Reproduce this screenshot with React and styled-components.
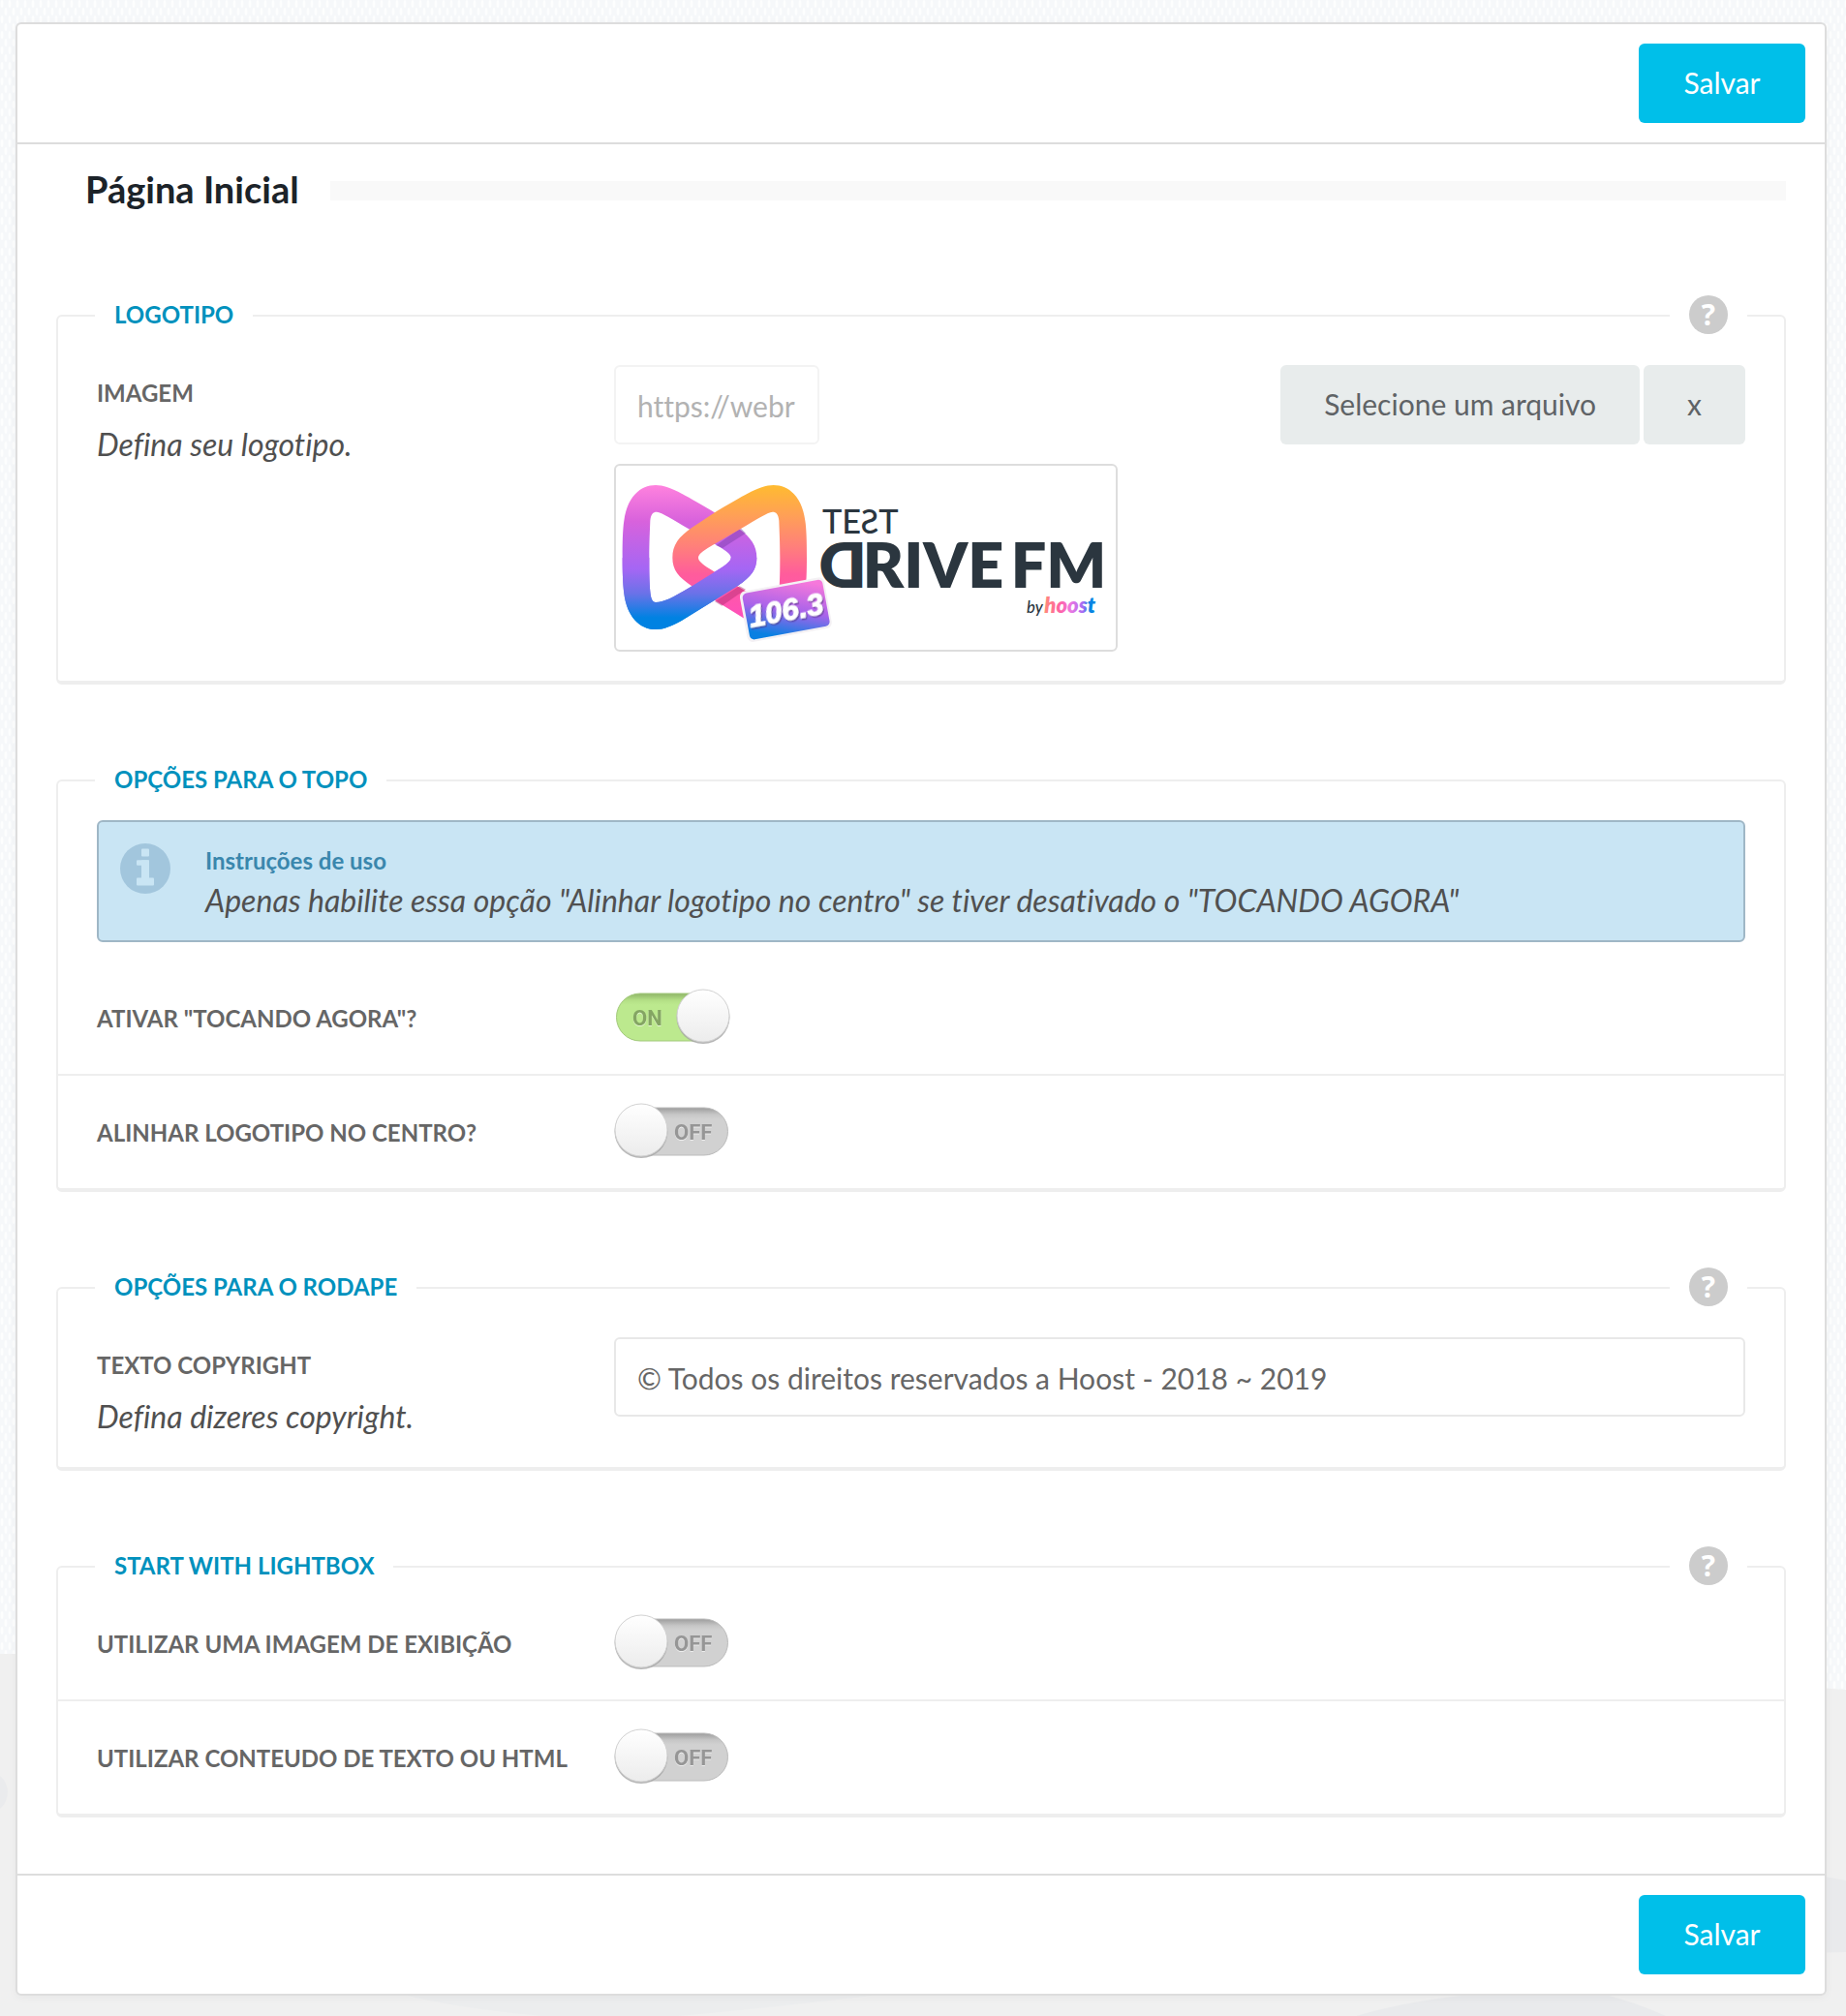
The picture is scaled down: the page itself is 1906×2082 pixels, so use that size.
import React, { useState } from "react";
import styled, { createGlobalStyle } from "styled-components";

const GlobalStyle = createGlobalStyle`
  * {
    box-sizing: border-box;
  }

  body {
    margin: 0;
    background-color: #f0f0f0;
    font-family: Lato, "Liberation Sans", sans-serif;
    font-size: 30px;
    font-variant-ligatures: no-common-ligatures;
    color: #666;
  }
`;

const Page = styled.div`
  position: relative;
  padding: 23px 20px 21px 16px;
`;

const Backdrop = styled.svg`
  position: absolute;
  top: 0;
  left: 0;
  width: 100%;
  height: 100%;
`;

const Panel = styled.form`
  position: relative;
  background-color: #fff;
  border: 2px solid #ddd;
  border-radius: 6px;
  box-shadow: 0 2px 10px rgba(0, 0, 0, 0.04);
`;

const Toolbar = styled.div`
  display: flex;
  justify-content: flex-end;
  padding: 20px;
`;

const Header = styled(Toolbar)`
  border-bottom: 2px solid #ddd;
`;

const Footer = styled(Toolbar)`
  border-top: 2px solid #ddd;
`;

const Button = styled.button`
  height: 82px;
  padding: 0 45px 2px;
  border: none;
  border-radius: 6px;
  font-family: inherit;
  font-size: 30px;
  cursor: pointer;
  background-color: #e8ecec;
  color: #5f6366;
`;

const SaveButton = styled(Button)`
  min-width: 172px;
  background-color: #00bfe9;
  color: #fff;
`;

const Body = styled.main`
  padding: 0 40px 58px;
`;

const TitleRow = styled.div`
  display: flex;
  align-items: center;
  gap: 32px;
  height: 96px;
  padding-left: 30px;
`;

const Title = styled.h1`
  margin: 0;
  padding-bottom: 4px;
  font-size: 38px;
  font-weight: 700;
  color: #1c2329;
`;

const TitleBar = styled.div`
  flex: 1;
  height: 20px;
  background-color: #f9f9f9;
`;

const Group = styled.fieldset`
  position: relative;
  min-width: 0;
  margin: 84px 0 0;
  padding: 6px 0 0;
  border: 2px solid #eee;
  border-bottom-width: 4px;
  border-radius: 6px;

  &:first-of-type {
    margin-top: 66px;
  }
`;

const Legend = styled.legend`
  margin-left: 38px;
  padding: 0 20px 2px;
  font-size: 24px;
  font-weight: 700;
  line-height: 28px;
  color: #0091bd;
`;

const HelpBox = styled.div`
  position: absolute;
  top: -36px;
  right: 38px;
  padding: 0 20px;
  background-color: #fff;
`;

const HelpButton = styled.button`
  display: block;
  width: 40px;
  height: 40px;
  padding: 0;
  border: none;
  border-radius: 50%;
  background-color: #ccc;
  color: #fff;
  font-family: "Open Sans", sans-serif;
  font-size: 30px;
  font-weight: 700;
  line-height: 40px;
  cursor: pointer;
`;

const Row = styled.div`
  display: grid;
  grid-template-columns: 534px 1fr;
  align-items: start;
  padding: 30px 40px;

  & + & {
    border-top: 2px solid #eee;
  }
`;

const Label = styled.label`
  display: block;
  padding-top: 2px;
  font-size: 24px;
  font-weight: 700;
  line-height: 54px;
  color: #666;
`;

const Description = styled.p`
  margin: 0;
  padding-top: 4px;
  font-size: 32px;
  font-style: italic;
  line-height: 44px;
  color: #505050;
`;

const Input = styled.input`
  width: 100%;
  height: 82px;
  padding: 2px 22px 0;
  border: 2px solid #e8e8e8;
  border-radius: 6px;
  background-color: #fff;
  font-family: inherit;
  font-size: 30px;
  font-variant-ligatures: inherit;
  color: #666;

  &:disabled {
    width: 212px;
    border-color: #f3f3f3;
    color: #b2b2b2;
  }
`;

const Upload = styled.div`
  display: flex;
  flex-direction: column;
  align-items: flex-start;
  gap: 20px;
`;

const UploadLine = styled.div`
  display: flex;
  align-self: stretch;
  justify-content: space-between;
`;

const UploadButtons = styled.div`
  display: flex;
  gap: 4px;
`;

const Preview = styled.div`
  width: 520px;
  border: 2px solid #ddd;
  border-radius: 6px;

  svg {
    display: block;
    width: 100%;
  }
`;

const Alert = styled.div`
  display: flex;
  gap: 36px;
  margin: 20px 40px;
  padding: 20px 22px;
  border: 2px solid #9fb7c6;
  border-radius: 6px;
  background-color: #c9e5f4;
`;

const AlertIcon = styled.svg`
  flex: none;
  width: 52px;
  height: 52px;
  margin-top: 2px;
`;

const AlertTitle = styled.h4`
  margin: 0;
  font-size: 24px;
  font-weight: 700;
  line-height: 40px;
  color: #3a87ad;
`;

const AlertText = styled.p`
  margin: 0;
  font-size: 32px;
  font-style: italic;
  line-height: 42px;
  color: #505050;
`;

const SwitchBox = styled.div`
  position: relative;
  width: 120px;
  height: 56px;

  input {
    position: absolute;
    inset: 0;
    width: 100%;
    height: 100%;
    margin: 0;
    opacity: 0;
    cursor: pointer;
  }

  svg {
    display: block;
    overflow: visible;
  }

  text {
    font-family: Roboto, "Liberation Sans", sans-serif;
    font-size: 22px;
    font-weight: 700;
    filter: drop-shadow(0 1px 0 rgba(255, 255, 255, 0.6));
  }
`;

const Background = () => (
  <Backdrop viewBox="0 0 1906 2082" preserveAspectRatio="none" aria-hidden="true">
    <defs>
      <pattern id="weave" width="8" height="16" patternUnits="userSpaceOnUse">
        <rect width="8" height="16" fill="#f6f8fa" />
        <ellipse cx="2" cy="4" rx="1.5" ry="4" fill="#fdfefe" />
        <ellipse cx="6" cy="12" rx="1.5" ry="4" fill="#fdfefe" />
      </pattern>
    </defs>
    <rect width="1906" height="2082" fill="#f0f0f0" />
    <path d="M0 0H1906V1745Q1400 1708 900 1708H0Z" fill="url(#weave)" />
    <circle cx="-14" cy="1851" r="22" fill="#eaebed" />
    <path d="M1700 1930Q1850 1930 1906 1942V2016Q1880 2017 1700 2017Z" fill="#e9eaec" />
    <path d="M420 2061H900Q780 2075 700 2082H560Q480 2075 420 2061Z" fill="#ecedee" />
    <path d="M1400 2082Q1460 2064 1540 2058H1650Q1690 2068 1720 2082Z" fill="#e9eaec" />
  </Backdrop>
);

const InfoIcon = () => (
  <AlertIcon viewBox="0 0 52 52" aria-hidden="true">
    <circle cx="26" cy="26" r="26" fill="#a2c6dd" />
    <g fill="#c9e5f4">
      <rect x="22" y="5.5" width="8" height="8" rx="1" />
      <rect x="17" y="17.3" width="13" height="5.5" rx="1" />
      <rect x="22" y="17.3" width="8" height="22" rx="1" />
      <rect x="17" y="35.5" width="18" height="8" rx="1" />
    </g>
  </AlertIcon>
);

// one closed ring of the logo mark, mirrored for the second one
const LOOP =
  "M32 300C32 250 33 210 37 185C46 115 85 75 135 75C175 75 215 100 310 155L385 205C430 235 448 262 448 300C448 338 430 360 385 390L215 495C185 512 160 522 135 522C85 522 45 480 37 410C33 380 32 340 32 300ZM115 300C115 250 117 215 118 185C120 165 127 158 138 158C155 160 185 180 240 212L330 265C355 280 368 290 368 300C368 310 355 320 335 333L240 392C190 422 160 438 135 438C124 438 120 425 118 405C115 370 115 340 115 300Z";

const Logo = () => (
  <svg viewBox="12 15 1548 570" role="img" aria-label="Test Drive FM 106.3">
    <defs>
      <linearGradient id="cool" gradientUnits="userSpaceOnUse" x1="0" y1="75" x2="0" y2="522">
        <stop offset="0" stopColor="#ff82de" />
        <stop offset="0.25" stopColor="#d862dc" />
        <stop offset="0.58" stopColor="#a566f4" />
        <stop offset="0.75" stopColor="#6b72e8" />
        <stop offset="0.92" stopColor="#0082e2" />
      </linearGradient>
      <linearGradient id="warm" gradientUnits="userSpaceOnUse" x1="0" y1="75" x2="0" y2="500">
        <stop offset="0" stopColor="#ffbb30" />
        <stop offset="0.22" stopColor="#ffa056" />
        <stop offset="0.45" stopColor="#ff7f7b" />
        <stop offset="0.65" stopColor="#ff5c9c" />
        <stop offset="1" stopColor="#ff4fbe" />
      </linearGradient>
      <linearGradient id="badge" x1="0.8" y1="0" x2="0.2" y2="1">
        <stop offset="0" stopColor="#f678db" />
        <stop offset="0.5" stopColor="#a863ea" />
        <stop offset="0.95" stopColor="#0a80e2" />
      </linearGradient>
      <linearGradient id="hoost" x1="0" x2="1">
        <stop offset="0" stopColor="#ff8a7a" />
        <stop offset="0.3" stopColor="#ff62a4" />
        <stop offset="0.5" stopColor="#ee78e0" />
        <stop offset="0.75" stopColor="#a56cf4" />
        <stop offset="0.87" stopColor="#0a84e2" />
      </linearGradient>
      <filter id="badge-shadow">
        <feDropShadow dx="3" dy="5" stdDeviation="2" floodColor="#4b2f80" floodOpacity="0.6" />
      </filter>
      <clipPath id="lower">
        <rect x="0" y="300" width="460" height="240" />
      </clipPath>
    </defs>
    <path d={LOOP} fill="url(#cool)" fillRule="evenodd" />
    <path d="M322 262L398 208L414 224L342 270Z" fill="#7a3ba8" opacity="0.45" />
    <path d={LOOP} fill="url(#warm)" fillRule="evenodd" transform="translate(635 0) scale(-1 1)" />
    <path d="M318 436L395 388L414 398L340 449Z" fill="#b02c72" opacity="0.45" />
    <path d={LOOP} fill="url(#cool)" fillRule="evenodd" clipPath="url(#lower)" />
    <g transform="rotate(-10.5 538 461)">
      <rect x="405" y="381" width="266" height="160" rx="18" fill="#f4f1f4" />
      <rect x="413" y="388" width="252" height="146" rx="14" fill="url(#badge)" />
      <text
        x="538"
        y="494"
        textAnchor="middle"
        fontFamily="Liberation Sans, sans-serif"
        fontSize="94"
        fontWeight="700"
        fontStyle="italic"
        fill="#fff"
        stroke="#fff"
        strokeWidth="3"
        filter="url(#badge-shadow)"
      >
        106.3
      </text>
    </g>
    <g fill="#2b363f" fontFamily="Lato, sans-serif">
      <g fontSize="103" fontWeight="500">
        <text x="651" y="224">TE</text>
        <text transform="translate(826 224) scale(-1 1)">S</text>
        <text x="826" y="224">T</text>
      </g>
      <g fontSize="194" fontWeight="800">
        <text transform="translate(788 393) scale(-1 1)">D</text>
        <text x="776" y="393">RIVE</text>
        <text x="1235" y="393">FM</text>
      </g>
      <g fontStyle="italic">
        <text x="1284" y="471" fontSize="50" fontWeight="500">by</text>
        <text x="1339" y="471" fontSize="66" fontWeight="800" fill="url(#hoost)">hoost</text>
      </g>
    </g>
  </svg>
);

const Switch = ({ id, initial = false }) => {
  const [on, setOn] = useState(initial);

  return (
    <SwitchBox>
      <svg width="120" height="56" viewBox="0 2 120 56" aria-hidden="true">
        <defs>
          <linearGradient id={`${id}-knob`} x1="0" y1="0" x2="0" y2="1">
            <stop offset="0" stopColor="#fff" />
            <stop offset="1" stopColor="#ececec" />
          </linearGradient>
          <linearGradient id={`${id}-track`} x1="0" y1="0" x2="0" y2="1">
            <stop offset="0" stopColor={on ? "#8fb568" : "#9c9c9c"} />
            <stop offset="0.14" stopColor={on ? "#b3df85" : "#c6c6c6"} />
            <stop offset="0.24" stopColor={on ? "#bce98e" : "#d1d1d1"} />
          </linearGradient>
        </defs>
        <rect
          x={on ? 2.5 : 10.5}
          y="5"
          width="107"
          height="49"
          rx="24.5"
          fill={`url(#${id}-track)`}
          stroke={on ? "#a3c97c" : "#bcbcbc"}
        />
        <text x={on ? 19 : 62} y="38" fill={on ? "#84a563" : "#969696"}>{on ? "ON" : "OFF"}</text>
        <circle cx={on ? 92 : 28} cy="29.5" r="27.5" fill="#a5a5a5" opacity="0.8" />
        <circle cx={on ? 92 : 28} cy="28" r="27" fill={`url(#${id}-knob)`} stroke="#d2d2d2" />
      </svg>
      <input id={id} type="checkbox" checked={on} onChange={(e) => setOn(e.target.checked)} />
    </SwitchBox>
  );
};

const Help = () => (
  <HelpBox>
    <HelpButton type="button" aria-label="Ajuda">?</HelpButton>
  </HelpBox>
);

const SwitchRow = ({ id, label, initial }) => (
  <Row>
    <Label htmlFor={id}>{label}</Label>
    <Switch id={id} initial={initial} />
  </Row>
);

const App = () => {
  const [copyright, setCopyright] = useState("© Todos os direitos reservados a Hoost - 2018 ~ 2019");

  const handleSubmit = (e) => {
    e.preventDefault();
  };

  return (
    <Page>
      <GlobalStyle />
      <Background />
      <Panel onSubmit={handleSubmit}>
        <Header>
          <SaveButton type="submit">Salvar</SaveButton>
        </Header>
        <Body>
          <TitleRow>
            <Title>Página Inicial</Title>
            <TitleBar />
          </TitleRow>

          <Group>
            <Legend>LOGOTIPO</Legend>
            <Help />
            <Row>
              <div>
                <Label htmlFor="logo">IMAGEM</Label>
                <Description>Defina seu logotipo.</Description>
              </div>
              <Upload>
                <UploadLine>
                  <Input id="logo" type="text" value="https://webr" disabled />
                  <UploadButtons>
                    <Button type="button">Selecione um arquivo</Button>
                    <Button type="button">x</Button>
                  </UploadButtons>
                </UploadLine>
                <Preview>
                  <Logo />
                </Preview>
              </Upload>
            </Row>
          </Group>

          <Group>
            <Legend>OPÇÕES PARA O TOPO</Legend>
            <Alert>
              <InfoIcon />
              <div>
                <AlertTitle>Instruções de uso</AlertTitle>
                <AlertText>
                  Apenas habilite essa opção "Alinhar logotipo no centro" se tiver desativado o "TOCANDO AGORA"
                </AlertText>
              </div>
            </Alert>
            <SwitchRow id="now-playing" label={'ATIVAR "TOCANDO AGORA"?'} initial />
            <SwitchRow id="center-logo" label="ALINHAR LOGOTIPO NO CENTRO?" />
          </Group>

          <Group>
            <Legend>OPÇÕES PARA O RODAPE</Legend>
            <Help />
            <Row>
              <div>
                <Label htmlFor="copyright">TEXTO COPYRIGHT</Label>
                <Description>Defina dizeres copyright.</Description>
              </div>
              <Input
                id="copyright"
                type="text"
                value={copyright}
                onChange={(e) => setCopyright(e.target.value)}
              />
            </Row>
          </Group>

          <Group>
            <Legend>START WITH LIGHTBOX</Legend>
            <Help />
            <SwitchRow id="lightbox-image" label="UTILIZAR UMA IMAGEM DE EXIBIÇÃO" />
            <SwitchRow id="lightbox-html" label="UTILIZAR CONTEUDO DE TEXTO OU HTML" />
          </Group>
        </Body>
        <Footer>
          <SaveButton type="submit">Salvar</SaveButton>
        </Footer>
      </Panel>
    </Page>
  );
};

export default App;
